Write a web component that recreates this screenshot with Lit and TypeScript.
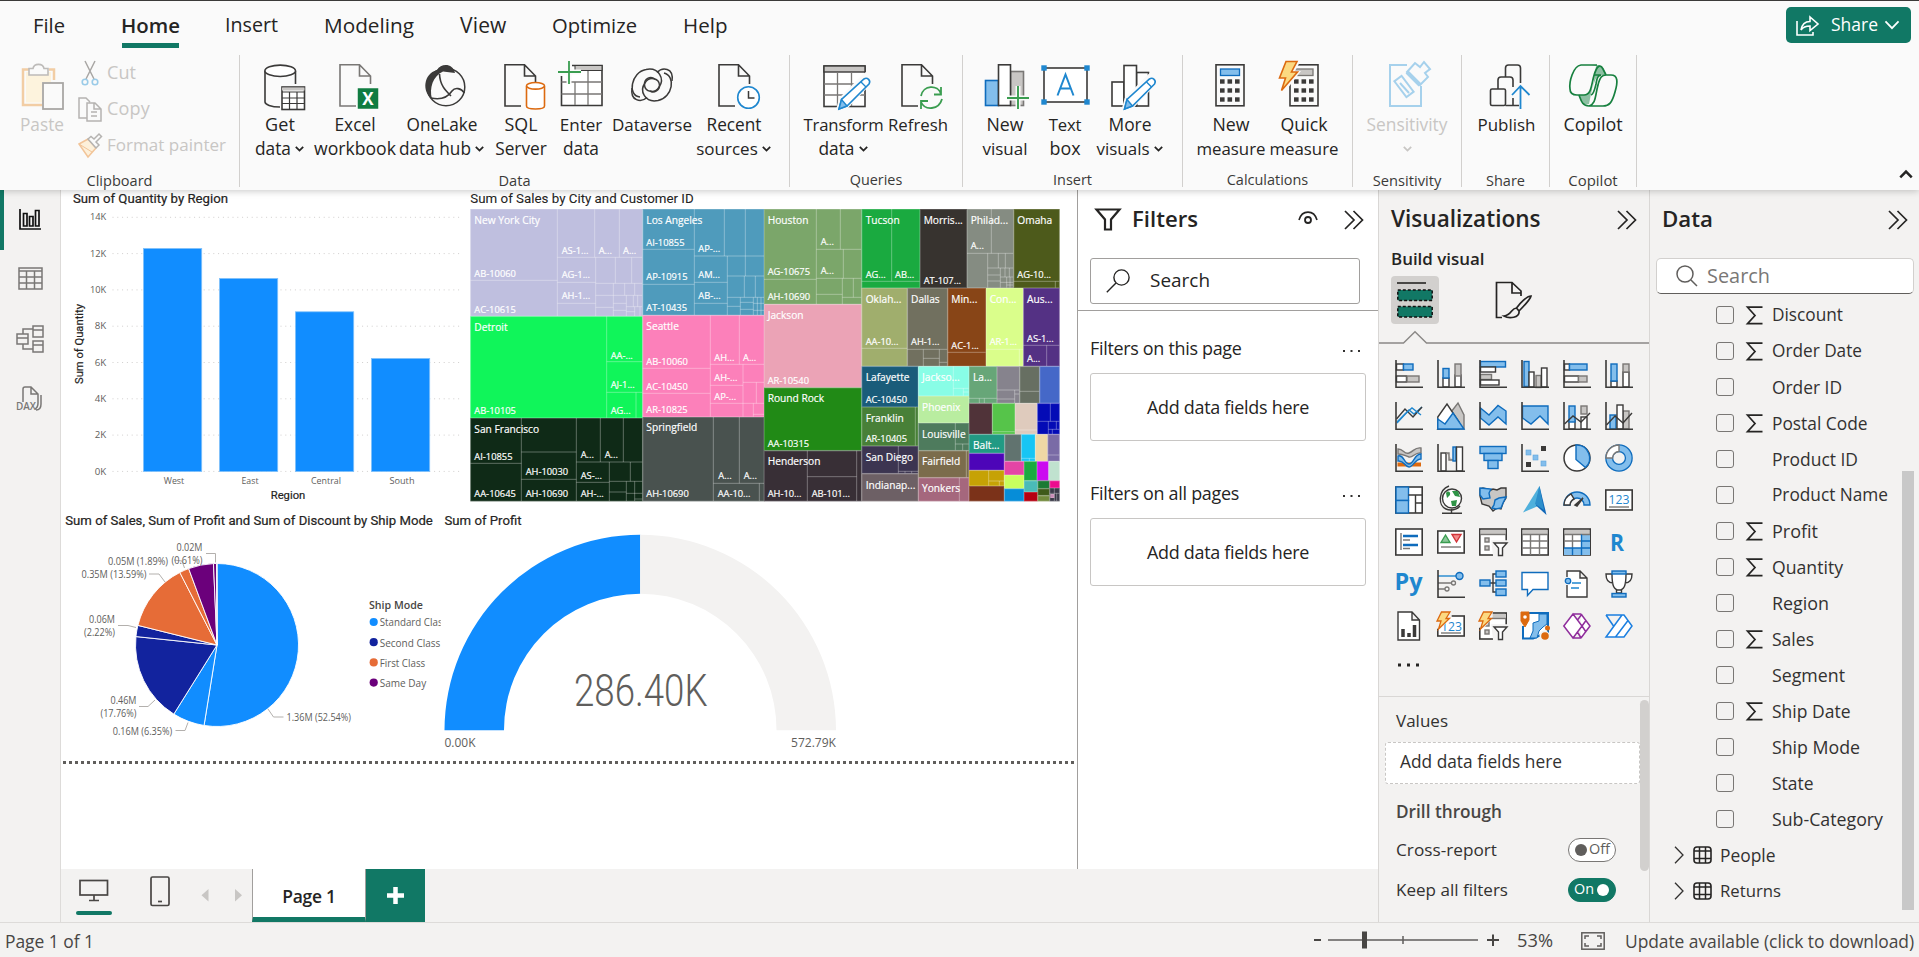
import { LitElement, html, svg, css, nothing } from 'lit';
import { customElement, property } from 'lit/decorators.js';

/* A single line label that sizes and tracks its letters so that it fills a given width. */
@customElement('fit-label')
export class FitLabel extends LitElement {
  @property({ type: Number }) w = 0;
  @property() text = '';
  static styles = css`
    :host { display: inline-block; white-space: pre; flex: none; }
    span { display: inline-block; transform: translate(-1px, -1px); }
  `;
  updated() {
    const s = this.renderRoot.querySelector('span') as HTMLElement;
    if (!this.w || !s) return;
    s.style.letterSpacing = '0px';
    s.style.fontSize = '';
    const target = this.w + 2;
    const k = Math.min(1.05, Math.max(0.97, target / s.getBoundingClientRect().width));
    s.style.fontSize = `${(parseFloat(getComputedStyle(s).fontSize) * k).toFixed(2)}px`;
    const d = (target - s.getBoundingClientRect().width) / this.text.length;
    s.style.letterSpacing = `${d.toFixed(3)}px`;
    this.style.width = `${this.w}px`;
  }
  render() { return html`<span>${this.text}</span>`; }
}
const t = (text: string, w = 0) => html`<fit-label .text=${text} .w=${w}></fit-label>`;

/* ---------- ribbon icons, 48 x 52 ---------- */
const D = '#3b3a39', G = '#797775', B = '#0f6cbd', LB = '#83beec', LG = '#c8c6c4', W = '#fafafa';
const doc = (x: number, c = D) => svg`
  <path d="M${x} 4.7h19l11.5 11.3V46H${x}z" fill=${W} stroke="none"/>
  <path d="M${x + 16} 46H${x}V4.7h19.5l11 11.3V24M${x + 19.5} 4.7V16h11" fill="none" stroke=${c} stroke-width="1.6"/>`;
const pencil = svg`
  <path d="M18 50l3-11 24-24a4 4 0 0 1 6 6L27 46z" fill=${W} stroke=${W} stroke-width="4"/>
  <path d="M19 49l2.5-9.500L44 19a3.600 3.600 0 0 1 5 5L27 46z" fill="#fff" stroke="#1f87cf" stroke-width="1.6"/>
  <path d="M19 49l2.500-9.500 5.500 6.500zM41 22l5 5" fill=${LB} stroke="#1f87cf" stroke-width="1.4"/>`;
const calc = (x: number) => svg`
  <rect x=${x} y="4.800" width="28" height="41" fill=${W} stroke=${D} stroke-width="1.600"/>
  ${[0, 1, 2].map(r => [0, 1, 2].map(c => svg`<rect x=${x + 4 + c * 7.5} y=${19.3 + r * 9} width="4.600" height="4.400" fill=${D}/>`))}`;
const bolt = (s = '') => svg`<path transform=${s} d="M9 1.500H20L14.500 12H20.500L4.500 30.500L8.500 18H2.500z" fill="#fcd981" stroke="#dc6a10" stroke-width="1.600"/>`;
const ic: Record<string, unknown> = {
  get: svg`<path d="M9 11V42c0 2.500 6 5 15 5M39.500 11V24" fill="none" stroke=${D} stroke-width="1.600"/>
    <ellipse cx="24.200" cy="10.800" rx="15.300" ry="5.700" fill="#fff" stroke=${D} stroke-width="1.600"/>
    <rect x="26" y="27" width="22.500" height="22.500" fill="#fff" stroke=${D} stroke-width="1.600"/>
    <path d="M26 29h22.500" stroke=${LG} stroke-width="3"/><path d="M26 32h22.500M26 38h22.500M26 43.500h22.500M33.500 32v17M41 32v17" stroke=${D} stroke-width="1.200"/>`,
  excel: svg`${doc(9, G)}<rect x="26" y="27.500" width="22" height="22" fill="#107c41" stroke=${W} stroke-width="1.500"/>
    <text x="37" y="44.500" font-size="17" font-weight="700" fill="#fff" text-anchor="middle">X</text>`,
  onelake: svg`<circle cx="28" cy="27" r="18.800" fill="none" stroke=${D} stroke-width="1.500"/>
    <path d="M19 10C5 14 4 32 14 39C11 28 15 16 25 11.500L37 13C35 3 23 3 19 10z" fill=${D}/>
    <path d="M21.500 14C22 25 27 30 33 36M13 38C27 41 32 34 34 31C37 27 43 28 46.500 33" fill="none" stroke=${D} stroke-width="1.600"/>`,
  sql: svg`${doc(8)}<path d="M29 28V46c0 5 19 5 19 0V28" fill="#fff" stroke=${W} stroke-width="4"/>
    <path d="M29.500 26V46c0 4 18 4 18 0V26" fill="#fff" stroke="#dc6a10" stroke-width="1.600"/><ellipse cx="38.500" cy="25.800" rx="9" ry="3.300" fill="#fff" stroke="#dc6a10" stroke-width="1.600"/>`,
  enter: svg`<path d="M15 5.500H45V45.500H4.500V16" fill="#fff" stroke=${D} stroke-width="1.600"/><rect x="18" y="5.500" width="27" height="5" fill=${LG} stroke=${D} stroke-width="1"/>
    <path d="M31 11v34M18 22v23M4.500 22H45M4.500 34H45" stroke=${G} stroke-width="1.300"/><path d="M12 1V24M1 12H24" stroke=${W} stroke-width="5"/><path d="M12 1V24M1 12H24" stroke="#3a9d50" stroke-width="1.800"/>`,
  dataverse: svg`<g fill="none" stroke=${D} stroke-width="1.500"><path d="M12 37C-1 36 3 12 18 9.500C31 7 37 19 31 27C27 34 17 32 16.500 25C16 19 22 15.500 27 19"/><path d="M36 13C48 16 45 37 30 40.500C17 43 11 31 17 23C21 16 31 18 31.500 25C32 30 26 33.500 22 31"/><path d="M29 12.500C34 7 46 7 44 21M4 28C2 41 13 43 19 37.500"/></g>`,
  recent: svg`${doc(9)}<circle cx="38.500" cy="37.500" r="12.500" fill=${W}/><circle cx="38.500" cy="37.500" r="10.800" fill="#fff" stroke="#1f87cf" stroke-width="1.600"/><path d="M38.500 31V38h6" fill="none" stroke=${D} stroke-width="1.500"/>`,
  transform: svg`<rect x="4" y="6" width="41" height="40.500" fill="#fff" stroke=${D} stroke-width="1.600"/><rect x="4" y="6" width="41" height="6" fill=${LG} stroke=${D} stroke-width="1.400"/>
    <path d="M17.500 12v34M31.500 12v34M4 24H45M4 35H45" stroke=${G} stroke-width="1.300"/>${pencil}`,
  refresh: svg`${doc(8)}<circle cx="37" cy="38" r="13" fill=${W}/><path d="M27 36C29 25 44 24 47 34M47 27V34.500H40M48 39C45 50 31 51 27 42M27 49V41H34" fill="none" stroke="#3a9d50" stroke-width="1.800"/>`,
  newvisual: svg`<rect x="4.500" y="20.500" width="13" height="25" fill=${LB} stroke=${B} stroke-width="1.600"/><rect x="29.500" y="11.500" width="13" height="34" fill=${LG} stroke=${G} stroke-width="1.600"/><rect x="17.500" y="4.800" width="12" height="40.700" fill="#fff" stroke=${D} stroke-width="1.600"/>
    <path d="M37 26V49M26 38H48" stroke=${W} stroke-width="5"/><path d="M37 26V49M26 38H48" stroke="#3a9d50" stroke-width="1.900"/>`,
  textbox: svg`<rect x="3" y="8" width="43" height="34" fill="#fff" stroke=${D} stroke-width="1.600"/>${[[3, 8], [46, 8], [3, 42], [46, 42]].map(([a, b]) => svg`<rect x=${a - 2.7} y=${b - 2.7} width="5.400" height="5.400" fill="#1f87cf"/>`)}
    <path d="M16.500 35.500L24.500 14.500L32.500 35.500M19.500 28.500H29.500" fill="none" stroke="#1f87cf" stroke-width="2"/>`,
  morevisuals: svg`<rect x="6" y="22" width="12" height="24" fill="#fff" stroke=${D} stroke-width="1.600"/><rect x="30.500" y="12.500" width="12" height="33.500" fill="#fff" stroke=${D} stroke-width="1.600"/><rect x="18" y="5.500" width="12.500" height="40.500" fill="#fff" stroke=${D} stroke-width="1.600"/><g transform="translate(-.5 0)">${pencil}</g>`,
  newmeasure: svg`${calc(9)}<rect x="13.500" y="9" width="19" height="6.500" fill=${LB} stroke=${B} stroke-width="1.300"/>`,
  quick: svg`${calc(10)}<rect x="14" y="9" width="19" height="6.500" fill=${LG} stroke=${G} stroke-width="1.300"/><path d="M8 0H21L15 11H21L4 33L0 17z" fill=${W}/>${bolt('translate(-3 0)')}`,
  sensitivity: svg`<path d="M24 5H7V46H38V26" fill="none" stroke="#a6d1ec" stroke-width="2"/><g fill=${W} stroke="#a6d1ec" stroke-width="2"><rect x="11" y="22" width="20" height="9" transform="rotate(53 21 26.500)"/><path d="M17 23L26 33"/><path d="M24 12L32 3L37 7L41 2L47 9L42 13L45 17L37 25z"/><path d="M24 12L37 25" stroke-width="4"/></g>`,
  publish: svg`<g fill="none" stroke=${D} stroke-width="1.600"><rect x="7.500" y="29" width="15" height="16.500" rx="1.500"/><path d="M15 29V20a3 3 0 0 1 3-3h9a3 3 0 0 1 3 3V27M22.500 17V8a3 3 0 0 1 3-3h9a3 3 0 0 1 3 3V23M22.500 45.500H36M30 38v7"/></g><path d="M37.500 49V26M29 35L37.500 26L46.500 35" fill="none" stroke="#1f87cf" stroke-width="1.800"/>`,
  copilot: svg`<path d="M22 5H29C34 5 35 9 37 15H33C27 15 26 20 24 27L27 6z" fill="#8cc0a2"/><path d="M10 35H15C21 35 22 30 24 24L20 44C13 46 12 41 10 35z" fill="#8cc0a2"/>
    <g fill="none" stroke="#17803f" stroke-width="1.700"><path d="M28 5H12C4 6 0 22 1 29C1 34 5 35 8 35H15C24 35 22 20 27 10C29 5 32 5 34 9L37 15"/><path d="M37 15H42C49 15 49 22 46 32C43 43 40 46 34 46H20C13 46 12 40 10 35M20 46C27 44 26 36 29 25C31 17 33 15 37 15M22 35C25 34 26 28 27 24C28 19 28 16 32 15H25"/></g>`,
};
const ico = (name: string) => html`<svg class="ri" width="48" height="52" viewBox="0 0 48 52">${ic[name]}</svg>`;
const chev = (w = 9, sw = 1.8) => html`<svg class="chev" width=${w} height=${w * 0.62} viewBox="0 0 9 5.600"><path d="M.8 .8L4.500 4.600L8.200 .8" fill="none" stroke="currentColor" stroke-width=${sw}/></svg>`;
const dbl = html`<svg width="20" height="20" viewBox="0 0 20 20"><path d="M1 1l9 9-9 9M9.500 1l9 9-9 9" fill="none" stroke="#252423" stroke-width="1.700"/></svg>`;

type Line = [string, number, boolean?];
interface Btn { x: number; w: number; icon: string; lines: Line[]; off?: boolean }
const groups: { x: number; end: number; label: string; lw: number; btns: Btn[] }[] = [
  { x: 240, end: 790, label: 'Data', lw: 30, btns: [
    { x: 252, w: 56, icon: 'get', lines: [['Get', 28], ['data', 34, true]] },
    { x: 315, w: 80, icon: 'excel', lines: [['Excel', 39], ['workbook', 80]] },
    { x: 399, w: 86, icon: 'onelake', lines: [['OneLake', 69], ['data hub', 70, true]] },
    { x: 495, w: 52, icon: 'sql', lines: [['SQL', 31], ['Server', 49.5]] },
    { x: 559, w: 44, icon: 'enter', lines: [['Enter', 40.5], ['data', 34]] },
    { x: 613, w: 78, icon: 'dataverse', lines: [['Dataverse', 78]] },
    { x: 696, w: 76, icon: 'recent', lines: [['Recent', 53], ['sources', 59.5, true]] } ] },
  { x: 790, end: 963, label: 'Queries', lw: 50.5, btns: [
    { x: 804, w: 79, icon: 'transform', lines: [['Transform', 78], ['data', 34, true]] },
    { x: 889, w: 58, icon: 'refresh', lines: [['Refresh', 58]] } ] },
  { x: 963, end: 1183, label: 'Insert', lw: 37, btns: [
    { x: 981, w: 48, icon: 'newvisual', lines: [['New', 35], ['visual', 43]] },
    { x: 1041, w: 48, icon: 'textbox', lines: [['Text', 30.5], ['box', 29]] },
    { x: 1097, w: 66, icon: 'morevisuals', lines: [['More', 41], ['visuals', 51, true]] } ] },
  { x: 1183, end: 1353, label: 'Calculations', lw: 79.5, btns: [
    { x: 1197, w: 68, icon: 'newmeasure', lines: [['New', 35], ['measure', 67]] },
    { x: 1270, w: 68, icon: 'quick', lines: [['Quick', 45], ['measure', 67]] } ] },
  { x: 1353, end: 1462, label: 'Sensitivity', lw: 66.5, btns: [
    { x: 1367, w: 80, icon: 'sensitivity', lines: [['Sensitivity', 79], ['', 0, true]], off: true } ] },
  { x: 1462, end: 1550, label: 'Share', lw: 37, btns: [{ x: 1478, w: 57, icon: 'publish', lines: [['Publish', 56]] }] },
  { x: 1550, end: 1637, label: 'Copilot', lw: 47.4, btns: [{ x: 1564, w: 58, icon: 'copilot', lines: [['Copilot', 57]] }] },
];
const tabs: [string, number, number][] = [['File', 34, 30], ['Home', 122, 57], ['Insert', 226, 51], ['Modeling', 325, 88], ['View', 461, 44.5], ['Optimize', 553, 83], ['Help', 684, 42.5]];

/* ---------- chart text: y is the optical centre ---------- */
const st = (x: number, y: number, s: string, w: number, size: number, cls = 'cx', anchor = 'start') =>
  svg`<text class=${cls} x=${x} y=${y + size * 0.36} font-size=${size} text-anchor=${anchor} textLength=${w || nothing} lengthAdjust="spacingAndGlyphs">${s}</text>`;

const barChart = () => svg`
  ${st(73, 198.5, 'Sum of Quantity by Region', 155, 13, 'ti')}
  ${[14, 12, 10, 8, 6, 4, 2, 0].map((v, i) => { const y = 217.3 + i * 36.3; return svg`
    <line x1="112.500" x2="460" y1=${y} y2=${y} stroke="#d0cecd" stroke-width="1" stroke-dasharray="1 3.800"/>
    ${st(106.3, y - 0.3, v + 'K', v > 9 ? 16.3 : 11.5, 9.6, 'cx', 'end')}`; })}
  ${([['West', 143, 248, 20.5], ['East', 219, 278, 17], ['Central', 295, 311.3, 30], ['South', 371, 358, 25]] as [string, number, number, number][]).map(([n, x, y, w]) => svg`
    <rect x=${x + 0.5} y=${y + 0.5} width="58.200" height=${471 - y} fill="#118dff" stroke="#7fc0fb" stroke-width=".8"/>
    ${st(x + 31, 481, n, w, 9.6, 'cx', 'middle')}`)}
  ${st(288, 495, 'Region', 34.5, 11.5, 'ti', 'middle')}
  <g transform="translate(79.300 344) rotate(-90)">${st(0, 0, 'Sum of Quantity', 80, 11.5, 'ti', 'middle')}</g>`;

/* ---------- treemap, laid out on a canvas three units to the pixel ---------- */
type City = [string, number, number, number, number, string, [string, number, number][]];
const cities: City[] = [
  ['#bfbfdf', 31, 72, 547, 393, 'M292 72V393M31 286H292M404 72V217M478 72V217M292 217H547M407 217V393M292 292H407M292 355H407M466 217V295M515 217V295M407 295H547M460 295V393M407 331H460M407 367H460M494 295V331M524 295V331M460 331H547M460 355H499M460 376H499M499 331V393M520 331V365M533 331V365M499 365H547M540 365V393M524 365V393M499 380H524',
    [['New York City', 44, 105], ['AB-10060', 44, 265], ['AC-10615', 44, 373], ['AS-1...', 306, 196], ['A...', 417, 196], ['A...', 490, 196], ['AG-1...', 306, 268], ['AH-1...', 306, 331]]],
  ['#10f55a', 31, 394, 547, 698, 'M440 394V698M440 530H547M440 622H547M528 622V698', [['Detroit', 44, 426], ['AB-10105', 44, 676], ['AA-...', 453, 510], ['AJ-1...', 453, 599], ['AG...', 453, 676]]],
  ['#0f2a17', 31, 699, 547, 948, 'M184 699V948M349 699V948M31 835H184M184 801H349M184 883H349M421 699V831M490 699V831M349 831H547M448 831V948M349 892H448M511 831V889M448 889H547M499 889V948M524 889V948M448 921H499M499 925H547M524 942H547',
    [['San Francisco', 44, 732], ['AI-10855', 44, 814], ['AA-10645', 44, 925], ['AH-10030', 198, 859], ['AH-10690', 198, 925], ['A...', 363, 809], ['A...', 435, 809], ['AS-...', 363, 871], ['AH-...', 363, 925]]],
  ['#4f9bbc', 548, 72, 912, 390, 'M703 72V390M548 193H703M548 298H703M793 72V213M856 72V273M703 213H912M802 213V390M703 292H802M703 355H802M802 273H912M853 273V337M886 273V337M802 337H912M841 337V390M841 352H880M802 364H841M841 373H880M880 337V390M892 337V390M903 337V390M880 355H912M880 376H912',
    [['Los Angeles', 560, 105], ['AI-10855', 560, 172], ['AP-10915', 560, 274], ['AT-10435', 560, 367], ['AP-...', 716, 191], ['AM...', 716, 268], ['AB-...', 716, 331]]],
  ['#fc80ba', 548, 391, 912, 695, 'M751 391V695M548 550H751M548 625H751M838 391V538M751 538H912M849 538V695M751 601H849M751 655H912M849 592H912M889 592V655M880 655V695M880 688H912',
    [['Seattle', 560, 423], ['AB-10060', 560, 529], ['AC-10450', 560, 604], ['AR-10825', 560, 673], ['AH...', 764, 518], ['A...', 850, 518], ['AH-...', 764, 578], ['AP-...', 764, 635]]],
  ['#49524f', 548, 696, 912, 948, 'M760 696V948M838 696V895M760 895H912M898 895V948', [['Springfield', 560, 726], ['AH-10690', 560, 925], ['A...', 776, 872], ['A...', 852, 872], ['AA-10...', 774, 925]]],
  ['#7ba66a', 912, 72, 1204, 357, 'M1069 72V357M912 283H1069M1141 72V193M1069 193H1204M1150 193V280M1069 280H1204M1147 280V357M1069 328H1147M1180 280V337M1147 337H1204', [['Houston', 924, 105], ['AG-10675', 924, 260], ['AH-10690', 924, 334], ['A...', 1083, 170], ['A...', 1083, 257]]],
  ['#eba3b6', 912, 358, 1204, 607, '', [['Jackson', 924, 390], ['AR-10540', 924, 586]]],
  ['#218a16', 912, 608, 1204, 796, '', [['Round Rock', 924, 639], ['AA-10315', 924, 775]]],
  ['#382f36', 912, 797, 1204, 948, 'M1042 797V948M1042 875H1190M1190 797V948', [['Henderson', 924, 828], ['AH-10...', 924, 925], ['AB-101...', 1056, 925]]],
  ['#1aaa40', 1205, 72, 1379, 308, 'M1295 72V289M1205 289H1379', [['Tucson', 1218, 105], ['AG...', 1218, 269], ['AB...', 1306, 269]]],
  ['#37332f', 1380, 72, 1520, 308, '', [['Morris...', 1392, 105], ['AT-107...', 1392, 287]]],
  ['#858c82', 1521, 72, 1660, 308, 'M1594 72V205M1521 205H1660M1583 205V308M1615 205V249M1636 205V249M1583 249H1660M1621 249V308M1583 270H1621M1583 288H1621M1635 249V276M1648 249V276M1621 276H1660M1640 276V308M1650 276V308M1621 292H1660M1640 300H1660', [['Philad...', 1533, 105], ['A...', 1533, 182]]],
  ['#4d5a1b', 1661, 72, 1798, 308, 'M1661 289H1798M1786 289V308', [['Omaha', 1673, 105], ['AG-10...', 1673, 269]]],
  ['#a0ae6d', 1205, 309, 1341, 543, 'M1205 490H1341', [['Oklah...', 1218, 342], ['AA-10...', 1218, 470]]],
  ['#71705f', 1342, 309, 1462, 543, 'M1342 493H1462M1390 493V543M1438 493V543M1390 520H1438M1438 532H1462', [['Dallas', 1354, 342], ['AH-1...', 1354, 470]]],
  ['#884517', 1463, 309, 1577, 543, 'M1463 502H1577', [['Min...', 1475, 342], ['AC-1...', 1475, 482]]],
  ['#dafe8b', 1578, 309, 1689, 543, 'M1578 493H1689M1678 493V543', [['Con...', 1590, 342], ['AR-1...', 1590, 470]]],
  ['#543184', 1690, 309, 1798, 543, 'M1690 481H1798M1760 481V543', [['Aus...', 1702, 342], ['AS-1...', 1702, 461], ['A...', 1702, 521]]],
  ['#1a5c7a', 1205, 544, 1374, 665, '', [['Lafayette', 1218, 577], ['AC-10450', 1218, 643]]],
  ['#488038', 1205, 666, 1374, 782, 'M1366 666V782', [['Franklin', 1218, 699], ['AR-10405', 1218, 761]]],
  ['#3c3551', 1205, 783, 1374, 865, 'M1315 783V865M1315 859H1374M1335 859V865M1355 859V865', [['San Diego', 1218, 817]]],
  ['#6d6065', 1205, 866, 1374, 948, '', [['Indianap...', 1218, 900]]],
  ['#88fde6', 1375, 544, 1526, 632, 'M1480 544V632M1480 610H1526M1510 610V632M1510 621H1526', [['Jackso...', 1387, 577]]],
  ['#b9eda0', 1375, 633, 1526, 713, '', [['Phoenix', 1387, 667]]],
  ['#4e7b5d', 1375, 714, 1526, 796, 'M1486 714V796M1486 777H1526M1508 777V796', [['Louisville', 1387, 748]]],
  ['#7b6c4c', 1375, 797, 1526, 877, 'M1519 797V877', [['Fairfield', 1387, 828]]],
  ['#a5677d', 1375, 878, 1526, 948, 'M1498 878V948', [['Yonkers', 1387, 909]]],
  ['#67a678', 1527, 544, 1610, 654, 'M1527 640H1610M1558 640V654M1573 640V654', [['La...', 1540, 577]]],
  ['#86838d', 1611, 544, 1678, 654, 'M1611 615H1678M1664 615V654M1664 627H1678M1611 642H1664', []],
  ['#676f62', 1679, 544, 1738, 654, 'M1679 619H1738', []], ['#4568c8', 1739, 544, 1798, 654, '', []],
  ['#503339', 1527, 655, 1596, 747, '', []], ['#56c44a', 1597, 655, 1664, 747, 'M1597 740H1664', []], ['#dfcbbd', 1665, 655, 1731, 747, 'M1665 735H1731', []],
  ['#040bb6', 1732, 655, 1798, 747, 'M1771 655V709M1732 709H1798M1765 709V747M1765 733H1798M1777 733V747M1789 709V733', []],
  ['#219a84', 1527, 748, 1633, 804, '', [['Balt...', 1540, 780]]],
  ['#61736f', 1634, 748, 1683, 828, '', []], ['#17c5f4', 1684, 748, 1725, 828, 'M1684 820H1725M1708 820V828', []], ['#efd8a5', 1726, 748, 1762, 828, '', []], ['#7a6ba6', 1763, 748, 1798, 828, 'M1763 810H1798', []],
  ['#4d05b8', 1527, 805, 1632, 855, '', []], ['#c6a205', 1527, 856, 1632, 902, 'M1586 856V902M1586 888H1632M1618 888V902', []], ['#7b3219', 1527, 903, 1632, 948, '', []],
  ['#e445a5', 1633, 829, 1691, 869, '', []], ['#c9ff5e', 1633, 870, 1691, 910, '', []], ['#068dd8', 1633, 911, 1691, 948, '', []],
  ['#1aaa40', 1692, 829, 1730, 886, '', []], ['#cb0cf0', 1731, 829, 1765, 886, '', []], ['#c0e2cf', 1766, 829, 1798, 886, '', []],
  ['#4abbb8', 1692, 887, 1732, 920, '', []], ['#1b7a34', 1733, 887, 1768, 910, '', []], ['#ec0b8e', 1769, 887, 1798, 908, '', []],
  ['#b50011', 1692, 921, 1732, 948, '', []], ['#3f5a1a', 1733, 911, 1768, 931, '', []], ['#728a3c', 1733, 932, 1768, 948, '', []],
  ['#3a3a48', 1769, 909, 1798, 948, 'M1783 909V948M1769 925H1798M1790 925V948', []], ['#c78bb5', 1771, 927, 1782, 938, '', []],
];
const isId = (s: string) => /^A[A-Z]?[-.]|^A[A-Z]\.\.\./.test(s);
const treemap = () => svg`
  <text class="ti" x="31" y="53.500" font-size="39" textLength="670" lengthAdjust="spacingAndGlyphs">Sum of Sales by City and Customer ID</text>
  ${cities.map(([c, x0, y0, x1, y1, p]) => svg`<rect x=${x0} y=${y0} width=${x1 - x0 + 1} height=${y1 - y0 + 1} fill=${c}/><rect x=${x0 + 1} y=${y0 + 1} width=${x1 - x0 - 1} height=${y1 - y0 - 1} fill="none" stroke="#fff" stroke-opacity=".22" stroke-width="2.500"/>
    ${p ? svg`<path d=${p} fill="none" stroke="#fff" stroke-opacity=".32" stroke-width="3"/>` : ''}`)}
  ${cities.map(c => c[6].map(([s, x, y]) => svg`<text class="tm" x=${x - 1} y=${y + 10.5} font-size=${isId(s) ? 28 : 30.6}>${s}</text>`))}`;

/* ---------- pie ---------- */
const slices: [number, string][] = [[52.54, '#118dff'], [6.35, '#118dff'], [17.76, '#12239e'], [2.22, '#12239e'], [13.59, '#e66c37'], [1.89, '#e66c37'], [4.96, '#6b007b'], [0.61, '#6b007b'], [0.08, '#6b007b']];
const pie = () => {
  let a = 0; const cx = 217, cy = 645, r = 81.5;
  const pt = (p: number) => { const q = (p / 100) * Math.PI * 2; return `${(cx + r * Math.sin(q)).toFixed(2)} ${(cy - r * Math.cos(q)).toFixed(2)}`; };
  return svg`${slices.map(([v, c]) => { const s = pt(a); a += v; return svg`<path d="M${cx} ${cy}L${s}A${r} ${r} 0 ${v > 50 ? 1 : 0} 1 ${pt(a)}z" fill=${c} stroke="#fff" stroke-width=".9"/>`; })}
  <path d="M206 553.500h9.500v9M174 560l8 1 2.500 7M149 574h10l6 8M118 625.500h10l8 2M139 706.500h9l7-6.500M175.500 730.500h9.500l3-8M268 709l5.500 8h10" fill="none" stroke="#b3b0ad" stroke-width="1"/>
  ${st(202.5, 547.7, '0.02M', 26, 10.2, 'cx', 'end')}${st(202.5, 560.5, '(0.61%)', 31, 10.2, 'cx', 'end')}
  ${st(108, 561.5, '0.05M (1.89%)', 60, 10.2)}${st(81.5, 574.7, '0.35M (13.59%)', 65, 10.2)}
  ${st(115, 619.5, '0.06M', 26, 10.2, 'cx', 'end')}${st(115, 632.5, '(2.22%)', 31, 10.2, 'cx', 'end')}
  ${st(136.5, 700.5, '0.46M', 26, 10.2, 'cx', 'end')}${st(136.5, 713, '(17.76%)', 36, 10.2, 'cx', 'end')}
  ${st(112.7, 731.5, '0.16M (6.35%)', 59.5, 10.2)}${st(286.5, 717.5, '1.36M (52.54%)', 64.5, 10.2)}
  ${st(65.3, 520.3, 'Sum of Sales, Sum of Profit and Sum of Discount by Ship Mode', 367.5, 13, 'ti')}
  ${st(369, 605.3, 'Ship Mode', 54, 11, 'cb')}
  <clipPath id="lc"><rect x="360" y="600" width="80.700" height="100"/></clipPath><g clip-path="url(#lc)">
  ${([['Standard Class', '#118dff', 67.5], ['Second Class', '#12239e', 60.7], ['First Class', '#e66c37', 45.5], ['Same Day', '#6b007b', 46.5]] as [string, string, number][]).map(([s, c, w], i) => svg`
    <circle cx="373.700" cy=${622 + i * 20.2} r="4.100" fill=${c}/>${st(379.7, 622.3 + i * 20.2, s, w, 11.2)}`)}</g>`;
};
const gauge = () => svg`
  ${st(444.5, 520.3, 'Sum of Profit', 77, 13, 'ti')}
  <path d="M444.500 730.300A195.700 195.700 0 0 1 640.200 534.800V593.800A136 136 0 0 0 504 730.300z" fill="#118dff"/>
  <path d="M640.200 534.800A195.700 195.700 0 0 1 836 730.300H776.500A136 136 0 0 0 640.200 593.800z" fill="#f3f2f1"/>
  ${st(640.8, 690.6, '286.40K', 133.5, 44, 'big', 'middle')}
  ${st(444.500, 742.5, '0.00K', 31, 12)}${st(836, 742.5, '572.79K', 45, 12, 'cx', 'end')}`;

/* ---------- visualization gallery, 28 x 28 ---------- */
const ax = svg`<path d="M1 0V27.200H28" fill="none" stroke=${D} stroke-width="1.600"/>`;
const R = (x: number, y: number, w: number, h: number, k: string) => {
  const [f, s] = ({ b: [LB, B], w: ['#fff', D], g: [LG, G] } as Record<string, string[]>)[k];
  return svg`<rect x=${x} y=${y} width=${w} height=${h} fill=${f} stroke=${s} stroke-width="1.400"/>`;
};
const P = (d: string, s = D, f = 'none', w = 1.4) => svg`<path d=${d} stroke=${s} fill=${f} stroke-width=${w}/>`;
const frame = (y = 1, h = 26) => svg`<rect x=".8" y=${y} width="26.400" height=${h} fill="#fff" stroke=${D} stroke-width="1.600"/>`;
const funnel = P('M15 15H28L23.500 20V27.500H19.500V20z', D, '#fff');
const smallBolt = P('M4.500 0H13L9 6.500H12.500L1.500 17L4 9H0z', '#dc6a10', '#fcd981', 1.3);
const viz: unknown[] = [
  [R(1.5, 4, 7, 6, 'w'), R(8.5, 4, 9.5, 6, 'b'), R(1.5, 16, 10, 6, 'w'), R(12, 16, 12, 6, 'g'), ax],
  [R(6, 18, 6, 9, 'w'), R(6, 8.500, 6, 9.500, 'b'), R(18, 15, 6, 12, 'w'), R(18, 4, 6, 12, 'g'), ax],
  [R(1.5, 1.5, 25, 5.500, 'b'), R(1.5, 7, 15, 5, 'w'), R(1.5, 14.500, 11, 5, 'g'), R(1.5, 20, 18.500, 5, 'w'), ax],
  [R(3, 1.5, 5, 25, 'b'), R(8, 12, 5, 15, 'w'), R(15, 15.500, 5, 12, 'g'), R(20.500, 8, 5.500, 19, 'w'), ax],
  [R(1.500, 4, 5, 6, 'w'), R(6.500, 4, 17.500, 6, 'b'), R(1.500, 16, 14, 6, 'w'), R(15.500, 16, 8.500, 6, 'g'), ax],
  [R(6, 21, 6, 6, 'w'), R(6, 4, 6, 17, 'b'), R(18, 12, 6, 15, 'w'), R(18, 4, 6, 8, 'g'), ax],
  [P('M2 21L14 8L19 12L27 5', '#1f87cf'), P('M1.500 17L10 7L18 15L27 5M1.500 13'), P('M2 20L10 12L17 6L26 13', '#1f87cf'), ax],
  [P('M.8 27L21 1L27 13V27z', G, LG), P('M.8 15L10 2L22 20V27H.8z', D, '#fff'), P('M.8 17L8 22L16 11L27 27H.8z', B, LB)],
  [P('M1.500 6L10 13L19 3.500L27 9V22L19 15L10 23L1.500 16z', B, LB), ax],
  [P('M1.500 4H27V22L19 14L10 22L1.500 16z', B, LB), ax],
  [R(6, 18, 6, 9, 'w'), R(6, 4, 6, 16, 'b'), R(18, 15, 6, 12, 'w'), R(18, 4, 6, 8, 'g'), P('M1.500 22L10 14L18 20L27 11'), ax],
  [R(5, 13, 6, 14, 'b'), R(18, 9, 6, 18, 'g'), R(12, 3, 6, 24, 'w'), P('M1.500 23L10 14L18 21L27 11'), ax],
  [P('M2.500 20.500H26', '#dc6a10', 'none', 4), P('M3 5C9 5 9 11 14 9S20 3 26 4V9C20 8 18 14 14 13S9 10 3 10z', G, LG), P('M3 12C9 10 9 20 14 20S19 10 26 10V15C20 15 18 23 14 23S9 16 3 17z', B, LB), ax],
  [R(4, 9, 5, 18, 'w'), P('M9 9h3v7h4', G, LG), R(16, 3, 3, 14, 'b'), R(19.500, 3, 6, 24, 'w'), ax],
  [R(1, 2.500, 26, 7, 'b'), R(5, 9.500, 18, 7, 'b'), R(9, 16.500, 10, 8, 'b')],
  [svg`<g fill=${D}><rect x="20" y="2" width="5" height="5"/><rect x="5" y="18" width="5" height="5"/></g><g fill=${LB} stroke="#5ea5dc" stroke-width=".6"><rect x="5" y="6" width="5" height="5"/><rect x="12" y="11" width="5" height="5"/><rect x="20" y="17" width="5" height="5"/></g>`, ax],
  [svg`<circle cx="14" cy="14" r="13" fill="#fff" stroke=${D} stroke-width="1.500"/>`, P('M14 1A13 13 0 0 1 22.500 23.500L13 15.500V1z', B, LB)],
  [svg`<circle cx="14" cy="14" r="9.800" fill="none" stroke=${B} stroke-width="8"/><circle cx="14" cy="14" r="9.800" fill="none" stroke=${LB} stroke-width="5.400"/>`, P('M1 14A13 13 0 0 1 14 1V7.500A6.500 6.500 0 0 0 7.500 14z', G, '#fff')],
  [frame(), R(1, 1, 12.500, 13.500, 'b'), R(1, 14.500, 12.500, 12.500, 'b'), P('M13.500 9H27M20.500 9V27M20.500 17H27')],
  [svg`<circle cx="15" cy="12.500" r="9.500" fill="#fff" stroke=${D} stroke-width="1.400"/>`, P('M9 7C11 4 14 6 13 9L10 12zM15 5L21 5L23 11L18 10zM14 15L20 14L19 20L15 20z', 'none', '#2f9447'), P('M12 0C1 4 1 20 9 23C13 25 20 24 23 20M14.500 23V27M5 27.200H25')],
  [P('M1 3L4 2L12 4L14 3L18 4L22 2H27V12L24 17L22 23L18 22L14 25L10 20L3 18L1 10z', D, LG), P('M1 2L12 3L10 7L11 12L4 13L1 9z', B, LB), P('M16 14L20 12L27 11L24 17L22 22L17 23L13 22L15 19z', B, LB)],
  [P('M18.500 0L2 26.500L16 20.500z', 'none', '#4fb0dc'), P('M18.500 0L25.500 29L15 19.500z', 'none', '#1168b8'), P('M18.500 0L14 18L23 24z', 'none', '#2d8fcb')],
  [P('M1 19A13 13 0 0 1 27 19H21A7 7 0 0 0 7 19z', B, LB), P('M1 19A13 13 0 0 1 8 8L11 13A7 7 0 0 0 7 19z', D, '#fff'), P('M20 12L12 19L14 20z', D, D, 1.500)],
  [frame(4, 20), svg`<text x="14" y="18" font-size="13" fill="#1f87cf" text-anchor="middle" textLength="21" lengthAdjust="spacingAndGlyphs">123</text>`, P('M4 21H24', G)],
  [frame(), P('M6 5V22', G), P('M8 8H23M8 17H23', B, 'none', 2.500), P('M8 12H15M8 20.500H15', G)],
  [frame(3, 22), P('M4 14.500L8.500 7L13 14.500z', '#3a9d50', '#8cc79a'), P('M15 6.500H24L19.500 14z', '#d13438', '#f28b8b'), P('M4 19H24', G)],
  [frame(), svg`<rect x="1.500" y="2" width="25" height="4" fill=${LG}/>`, P('M1 6.500H27', G), R(6, 10, 4, 4, 'g'), R(6, 18, 4, 4, 'g'), P('M13 13H30V30H15z', '#f3f2f1', '#f3f2f1'), funnel],
  [frame(), svg`<rect x="1.500" y="2" width="25" height="4" fill=${LG}/>`, P('M1 6.500H27M1 13H27M1 20H27M9.500 6.500V27M18.500 6.500V27', G)],
  [frame(), svg`<rect x="1.500" y="2" width="25" height="4" fill=${LG}/><path d="M18.500 6.500H27V27H1V20H18.500z" fill=${LB}/>`, P('M1 6.500H27M1 13H18M9.500 6.500V20', G), P('M18.500 6.500V27M18.500 13H27M1 20H27M9.500 20V27', B)],
  [svg`<text x="5" y="22.500" font-size="23" font-weight="700" fill="#1f87cf" textLength="14" lengthAdjust="spacingAndGlyphs">R</text>`],
  [svg`<text x="-.5" y="20" font-size="24" font-weight="700" fill="#1f87cf" textLength="28" lengthAdjust="spacingAndGlyphs">Py</text>`],
  [P('M1 6H20', '#1f87cf'), svg`<circle cx="22.500" cy="6" r="3.500" fill=${LB} stroke=${B} stroke-width="1.400"/><circle cx="16.500" cy="13" r="2" fill="none" stroke=${G} stroke-width="1.300"/><circle cx="10" cy="19" r="2" fill="none" stroke=${G} stroke-width="1.300"/>`, P('M1 13H14.500M1 19H8', G), ax],
  [P('M10 13H17M14 13V4H17M14 13V22H17'), R(1, 10, 10, 6, 'b'), R(17, 1, 10, 6, 'b'), R(17, 10, 10, 6, 'b'), R(17, 19, 10, 6.500, 'b')],
  [P('M1 2.500H27V19.500H12L6.500 25.500V19.500H1z', B, '#fff')],
  [P('M4 7V1H17L24 8V27H4V15M17 1V8H24', D, '#fff'), svg`<circle cx="5" cy="11" r="2.700" fill=${LB} stroke=${B} stroke-width="1.300"/>`, P('M9 13H18M8 18H16', '#1f87cf')],
  [P('M7 4C7 16 9 20 14 20S21 16 21 4M7 4H1C1 10 3 13 8 13M21 4H27C27 10 25 13 20 13M11.500 20V23H16.500V20', D, '#fff'), R(7, 1, 14, 3, 'b'), R(7, 23.500, 14, 3.500, 'b')],
  [P('M3 0H17L24.500 8V28H3zM17 0V8H24.500', D, '#fff'), P('M8 25V17M14 25V21M19.500 25V13', D, 'none', 3.500)],
  [frame(4, 20), svg`<text x="14.500" y="19" font-size="13" fill="#1f87cf" text-anchor="middle" textLength="21" lengthAdjust="spacingAndGlyphs">123</text>`, P('M4 21H24', G), P('M-1 0H14V5L6 13L3 16H-1z', '#f3f2f1', '#f3f2f1'), smallBolt],
  [frame(1, 26), svg`<rect x="8" y="2" width="19" height="4" fill=${LG}/>`, P('M8 6.500H27', G), R(6, 10, 4, 4, 'g'), R(6, 18, 4, 4, 'g'), P('M13 13H30V30H15z', '#f3f2f1', '#f3f2f1'), funnel, P('M-1 0H13V5L5 15H-1z', '#f3f2f1', '#f3f2f1'), smallBolt],
  [P('M3 1H27V20L12 26.500H2V14', B, '#fff', 2), P('M18 2V9L12 11V19L9 26H16L18 19L22 15L26 12V2z', B, LB, 1), P('M0 0H8V8L4 15L0 9z', '#dc6a10', '#dc6a10', 1), svg`<circle cx="4" cy="5" r="1.800" fill="#fff"/><circle cx="23.500" cy="23.500" r="5" fill="#f3f2f1"/><circle cx="24" cy="24" r="3.800" fill="#dc6a10"/><circle cx="26.500" cy="16" r="2.500" fill="#dc6a10"/>`],
  [P('M10 2L.8 14L10 26L19 14zM18 2L27 14L18 26M10 2H18M10 26H18M14.500 8L19 2M14.500 20L18 26M19 14L23 8.500M19 14L23 20', '#8f2d9c', '#fff', 1.500)],
  [P('M1 3H19L27 14L19 25H1L17 3M1 3L8.500 14M10.500 25L23 8.500', '#1b7fe0', '#fff', 1.500)],
];

const fields: [string, number, boolean][] = [['Discount', 69, true], ['Order Date', 88, true], ['Order ID', 68, false], ['Postal Code', 93.5, true], ['Product ID', 84, false], ['Product Name', 114, false], ['Profit', 44, true], ['Quantity', 69, true], ['Region', 55, false], ['Sales', 40, true], ['Segment', 71, false], ['Ship Date', 76.5, true], ['Ship Mode', 86, false], ['State', 39.5, false], ['Sub-Category', 109, false]];

@customElement('app-root')
export class AppRoot extends LitElement {
  static styles = css`
    :host { display: flex; flex-direction: column; width: 1919px; height: 957px; overflow: hidden; font-family: "Open Sans", "Noto Sans", sans-serif; color: #252423; background: #f3f2f1; }
    * { box-sizing: border-box; }
    svg { flex: none; display: block; overflow: visible; }
    svg text { font-family: "Open Sans", "Noto Sans", sans-serif; }
    .head { height: 190px; flex: none; background: #fafafa; border-top: 1px solid #3b3a39; box-shadow: 0 1px 7px rgba(0,0,0,.22); position: relative; z-index: 2; display: flex; flex-direction: column; }
    .tabs { height: 54px; display: flex; font-size: 20px; line-height: 50px; }
    .tab { height: 47px; flex: none; }
    .tab.on { font-weight: 600; border-bottom: 5px solid #117865; }
    .share { margin: 6px 8px 0 auto; width: 125px; height: 36px; border-radius: 5px; background: #117865; color: #fff; display: flex; align-items: center; font-size: 17px; line-height: 36px; padding-left: 10px; gap: 13px; }
    .share .chev { margin-left: -6px; }
    .ribbon { display: flex; height: 133px; align-items: flex-start; font-size: 17.200px; }
    .grp { height: 132px; border-right: 1px solid #d2d0ce; display: flex; flex-direction: column; justify-content: space-between; flex: none; }
    .btns { display: flex; }
    .btn { display: flex; flex-direction: column; align-items: center; padding-top: 5px; line-height: 23.500px; flex: none; }
    .btn .ri { margin-bottom: 2px; }
    .ln { display: flex; align-items: center; gap: 5px; height: 23.500px; }
    .off { color: #c8c6c4; }
    .gl { height: 14px; line-height: 14px; font-size: 14.400px; text-align: center; color: #3b3a39; padding-top: 1px; }
    .clip { width: 240px; }
    .clip .body { display: flex; }
    .paste { width: 42px; margin-left: 21px; }
    .paste .ri { margin-left: 2px; }
    .cmds { margin-left: 15px; padding-top: 0; }
    .cmd { display: flex; align-items: center; height: 36px; gap: 6px; }
    .fold { margin: 115px 6px 0 auto; color: #252423; }
    .fold svg { transform: rotate(180deg); }
    .main { flex: 1; display: flex; min-height: 0; }
    .rail { width: 61px; border-right: 1px solid #dddbd9; flex: none; }
    .rail div { height: 60px; display: grid; place-items: center; padding: 0 0 3px 0; }
    .rail div.on { border-left: 4px solid #117865; padding-right: 4px; padding-bottom: 1px; }
    .mid { width: 1317px; flex: none; display: flex; flex-direction: column; }
    .work { display: flex; height: 679px; background: #fff; }
    .canvas { width: 1016px; display: grid; grid-template: 316px 240px auto / auto; overflow: hidden; }
    .row { display: flex; }
    .dots { height: 3px; margin: 15px 0 0 2px; width: 1012px; background: repeating-linear-gradient(90deg, #605e5c 0 3px, transparent 3px 6px); }
    .ti { font-family: Roboto, sans-serif !important; fill: #252423; font-weight: 400; stroke: #252423; stroke-width: .2px; }
    .cx { fill: #605e5c; } .cb { fill: #484644; font-weight: 600; } .tm { fill: #fff; stroke: #fff; stroke-width: .5px; }
    .big { font-family: Roboto, sans-serif !important; font-weight: 300; fill: #605e5c; }
    .filters { width: 301px; border-left: 1px solid #a19f9d; font-size: 18.500px; }
    .fh { display: flex; height: 68px; align-items: center; padding: 0 14px 9px 17px; font-size: 22.500px; font-weight: 600; }
    .fh .eye { margin: 0 26px 4px auto; }
    .fs { margin-left: 12px; width: 270px; height: 46px; border: 1px solid #a19f9d; border-radius: 3px; display: flex; align-items: center; padding-left: 15px; gap: 21px; font-size: 19px; }
    .rule { border-top: 1px solid #a19f9d; margin-top: 6px; height: 26px; }
    .fl { display: flex; justify-content: space-between; align-items: center; height: 24px; margin: 0 18px 0 13px; }
    .fb { margin: 13px 12px 40px; width: 276px; height: 68px; border: 1px solid #c8c6c4; border-radius: 3px; display: grid; place-items: center; }
    .pages { height: 53px; display: flex; font-size: 18px; }
    .ptab { width: 114px; border-left: 1px solid #a19f9d; border-right: 1px solid #a19f9d; border-bottom: 5px solid #117865; background: #fff; text-align: center; line-height: 57px; font-weight: 600; }
    .plus { width: 59px; background: #117865; display: grid; place-items: center; }
    .viz { width: 271px; border-left: 1px solid #d9d7d5; flex: none; display: flex; flex-direction: column; }
    .vh { height: 58px; display: flex; align-items: center; justify-content: space-between; padding: 1px 12px 0 13px; font-size: 22.500px; font-weight: 600; }
    .bv { height: 28px; line-height: 23px; padding-left: 13px; font-size: 17.200px; font-weight: 600; }
    .modes { height: 55px; padding-left: 12px; display: flex; gap: 56px; }
    .mode { width: 48px; height: 48px; border-radius: 4px; background: #d2d0ce; display: grid; place-items: center; }
    .gal { display: grid; grid-template-columns: repeat(6, 28px); gap: 14px; padding: 16px 0 0 16px; }
    .more { height: 57px; padding: 23px 0 0 19px; border-bottom: 1px solid #d9d7d5; flex: none; }
    .wells { display: flex; flex: 1; font-size: 17.500px; color: #323130; }
    .wl { width: 261px; line-height: 24px; }
    .bar { width: 9px; height: 171px; margin-top: 3px; background: #d2d0ce; border-radius: 5px; }
    .wl .v { padding: 12px 0 0 18px; }
    .drop { margin: 8px 0 0 6px; width: 255px; height: 42px; background: #fff; border: 1px dashed #c8c6c4; border-radius: 3px; line-height: 39px; padding-left: 15px; }
    .drill { padding: 16px 0 0 18px; font-weight: 600; color: #484644; }
    .opt { display: flex; height: 40px; align-items: center; justify-content: space-between; padding: 0 24px 0 18px; }
    .opt.first { margin-top: 5px; }
    .tg { width: 48px; height: 24px; border-radius: 12px; border: 1px solid #797775; background: #fff; color: #605e5c; font-size: 14px; display: flex; align-items: center; padding: 0 6px; justify-content: space-between; line-height: 22px; }
    .tg i { width: 12px; height: 12px; border-radius: 6px; background: #605e5c; }
    .tg.on { background: #117865; border-color: #117865; color: #fff; } .tg.on i { background: #fff; }
    .data { flex: 1; border-left: 1px solid #d9d7d5; }
    .dh { height: 58px; display: flex; align-items: center; justify-content: space-between; padding: 1px 11px 0 13px; font-size: 22.500px; font-weight: 600; }
    .ds { margin: 10px 0 0 6px; width: 258px; height: 36px; background: #fff; border: 1px solid #d2d0ce; border-bottom: 1px solid #605e5c; border-radius: 5px; display: flex; align-items: center; padding: 2px 0 0 19px; gap: 10px; font-size: 19.500px; color: #797775; line-height: 34px; }
    .ds svg { margin-top: -3px; }
    .list { display: flex; height: 627px; margin-top: 3px; justify-content: space-between; font-size: 17.200px; color: #323130; }
    .f { height: 36px; display: flex; align-items: center; padding-left: 66px; }
    .cb2 { width: 18px; height: 18px; border: 1px solid #797775; border-radius: 3px; flex: none; }
    .sg { width: 39px; padding-left: 12px; flex: none; }
    .f fit-label { margin-top: 1px; }
    .tb { padding-left: 24px; gap: 9px; }
    .sb { width: 12px; height: 439px; background: #c8c8c8; margin: 174px 5px 0 0; }
    .status { height: 35px; flex: none; border-top: 1px solid #dddbd9; display: flex; align-items: center; color: #484644; font-size: 18px; padding: 3px 6px 0 6px; }
    .zoomer { margin: -3px 20px 0 auto; }
    .status .fitp { margin: -2px 21px 0 29px; }
    .pct { margin-top: -3px; }
  `;
  render() {
    let tx = 0;
    return html`
    <div class="head">
      <div class="tabs">
        ${tabs.map(([n, x, w]) => { const m = x - tx; tx = x + w; return html`<div class="tab ${n === 'Home' ? 'on' : ''}" style="margin-left:${m}px;width:${w}px">${t(n, w)}</div>`; })}
        <div class="share"><svg width="23" height="21" viewBox="0 0 23 21"><path d="M1 6V20H17V17M5 15C6 9 9 6.500 14 6.500V2L22 9L14 15.500V11C10 11 7 12 5 15z" fill="none" stroke="#fff" stroke-width="1.600"/></svg>${t('Share', 45)}${chev(16, 1)}</div>
      </div>
      <div class="ribbon">
        <div class="grp clip">
          <div class="body off">
            <div class="btn paste"><svg class="ri" width="48" height="52" viewBox="0 0 48 52">
              <path d="M12 9.500H4V45H23" fill="none" stroke="#f2cda4" stroke-width="2.500"/><path d="M11 12H7V42.500H23V22H32V12z" fill="#fdf3dd"/><path d="M30 9.500H35V20" fill="none" stroke="#f2cda4" stroke-width="2.500"/>
              <path d="M10 15V8.500H14C15 3 24 3 25 8.500H29V15z" fill="#fafafa" stroke="#bdbbb9" stroke-width="1.600"/><rect x="24" y="23" width="20" height="26" fill="#fafafa" stroke="#a9a7a5" stroke-width="1.800"/></svg>${t('Paste', 42)}</div>
            <div class="cmds">
              <div class="cmd"><svg width="24" height="25" viewBox="0 0 24 25"><path d="M7 0L16 18M17 0L8 18" stroke="#a9a7a5" stroke-width="1.500"/><circle cx="7" cy="21" r="2.800" fill="none" stroke="#9bcbe8" stroke-width="1.600"/><circle cx="17" cy="21" r="2.800" fill="none" stroke="#9bcbe8" stroke-width="1.600"/></svg>${t('Cut', 27)}</div>
              <div class="cmd"><svg width="24" height="25" viewBox="0 0 24 25"><path d="M9 21H1V1H8L12 5M9 24V6H17L23 12V24zM16 6V12H23M13 15H19M13 19H19" fill="none" stroke="#b5b3b1" stroke-width="1.500"/></svg>${t('Copy', 41)}</div>
              <div class="cmd"><svg width="24" height="25" viewBox="0 0 24 25"><path d="M1 11L10 6L18 15L10 24z" fill="#fdf0da" stroke="#f2c498" stroke-width="1.500"/><path d="M1 11L14 19" stroke="#f2c498"/><path d="M10 6L13 3.500L16 6L21 1L23.500 3.500L18 9L21 12L18 15z" fill="#fafafa" stroke="#b5b3b1" stroke-width="1.500"/></svg>${t('Format painter', 117)}</div>
            </div>
          </div>
          <div class="gl">${t('Clipboard', 64)}</div>
        </div>
        ${groups.map(g => { let px = g.x; return html`<div class="grp" style="width:${g.end - g.x}px">
          <div class="btns">${g.btns.map(b => { const m = b.x - px; px = b.x + b.w; return html`<div class="btn ${b.off ? 'off' : ''}" style="margin-left:${m}px;width:${b.w}px">${ico(b.icon)}
            ${b.lines.map(([s, w, c]) => html`<div class="ln">${s ? t(s, w) : ''}${c ? chev() : ''}</div>`)}</div>`; })}</div>
          <div class="gl">${t(g.label, g.lw)}</div></div>`; })}
        <div class="fold">${chev(14, 1.6)}</div>
      </div>
    </div>
    <div class="main">
      <div class="rail">
        <div class="on"><svg width="22" height="21" viewBox="0 0 22 21"><path d="M1 0V20H22M4.500 4.500H8V17H4.500zM10.500 7.500H14V17H10.500zM16.500 1.500H20V17H16.500z" fill="none" stroke="#111" stroke-width="1.700"/></svg></div>
        <div><svg width="25" height="23" viewBox="0 0 25 23"><path d="M1 1H24V22H1zM1 4H24M1 10H24M1 16H24M8.500 4V22M16.500 4V22" fill="none" stroke="#797775" stroke-width="1.500"/></svg></div>
        <div><svg width="28" height="28" viewBox="0 0 28 28"><path d="M1 9H12V19H1zM1 13H12M17 1H27V12H17zM17 5H27M17 16H27V27H17zM17 20H27M7 9V4H17M7 19V24H17" fill="none" stroke="#797775" stroke-width="1.500"/></svg></div>
        <div><svg width="28" height="25" viewBox="0 0 28 25"><path d="M7 16V3C7 1.500 8 1 9 1H15L22 8V17C22 21 21 22 19 23M15 1V8H22M25 9V18C25 22 23 24 20 24" fill="none" stroke="#797775" stroke-width="1.500"/><text x="0" y="24" font-size="10" font-weight="600" fill="#797775" textLength="20" lengthAdjust="spacingAndGlyphs">DAX</text></svg></div>
      </div>
      <div class="mid">
        <div class="work">
          <div class="canvas">
            <div class="row"><svg width="399" height="316" viewBox="61 190 399 316">${barChart()}</svg><svg width="617" height="316" viewBox="0 15 1851 948">${treemap()}</svg></div>
            <div class="row"><svg width="379" height="240" viewBox="61 506 379 240">${pie()}</svg><svg width="637" height="240" viewBox="440 506 637 240">${gauge()}</svg></div>
            <div class="dots"></div>
          </div>
          <div class="filters">
            <div class="fh"><svg width="26" height="23" viewBox="0 0 26 23"><path d="M1.500 1.500H24.500L16 11.500V21.500H10V11.500z" fill="none" stroke="#252423" stroke-width="2.200"/></svg><span style="width:12px"></span>${t('Filters', 64)}
              <svg class="eye" width="20" height="14" viewBox="0 0 20 14"><path d="M1 9C4 -1.500 16 -1.500 19 9" fill="none" stroke="#252423" stroke-width="1.600"/><circle cx="10" cy="9" r="3" fill="none" stroke="#252423" stroke-width="1.800"/></svg>${dbl}</div>
            <div class="fs"><svg width="24" height="24" viewBox="0 0 24 24"><circle cx="15.500" cy="8.500" r="7.600" fill="none" stroke="#252423" stroke-width="1.400"/><path d="M10 14L.8 23.200" stroke="#252423" stroke-width="1.400"/></svg>${t('Search', 58)}</div>
            <div class="rule"></div>
            ${([['Filters on this page', 149.5], ['Filters on all pages', 147]] as [string, number][]).map(([s, w]) => html`
              <div class="fl">${t(s, w)}<svg width="17" height="3" viewBox="0 -4 17 3"><path d="M0 0h2M7.500 0h2M15 0h2" stroke="#323130" stroke-width="2"/></svg></div><div class="fb">${t('Add data fields here', 160)}</div>`)}
          </div>
        </div>
        <div class="pages">
          <svg width="191" height="52" viewBox="61 869 191 52"><g fill="none" stroke="#484644" stroke-width="1.700"><rect x="80" y="880.500" width="27.500" height="14.500"/><path d="M94 895v5M89 900.500h10"/><rect x="151" y="877" width="18" height="28.500" rx="1.500"/><path d="M158 901.500h4"/></g><rect x="76" y="911" width="36" height="4" rx="2" fill="#117865"/><path d="M208.500 889v12.500l-7-6.200zM235 889v12.500l7-6.200z" fill="#c8c6c4"/></svg>
          <div class="ptab">${t('Page 1', 51.5)}</div>
          <div class="plus"><svg width="17" height="17" viewBox="0 0 17 17"><path d="M8.500 0V17M0 8.500H17" stroke="#fff" stroke-width="4.500"/></svg></div>
        </div>
      </div>
      <div class="viz">
        <div class="vh">${t('Visualizations', 147.5)}${dbl}</div>
        <div class="bv">${t('Build visual', 91.5)}</div>
        <div class="modes"><div class="mode"><svg width="36" height="36" viewBox="0 0 36 36"><path d="M0 1H29" stroke="#252423" stroke-width="1.600"/><g fill="#117865" stroke="#111" stroke-width="1.500" stroke-dasharray="3 2"><rect x=".8" y="8" width="34.400" height="10.500"/><rect x=".8" y="24.500" width="34.400" height="10.500"/></g></svg></div>
          <svg width="38" height="48" viewBox="0 0 38 48"><path d="M7 41.500H1.500V6.500H17L26 15V20M17 6.500V17H26" fill="none" stroke="#252423" stroke-width="1.700"/><path d="M36 20C32 20 25 27 21.500 32L24 35C28 31 35 24 36 20zM21.500 32C16 32 17 39 9 40C14 43 25 42 24 35" fill="none" stroke="#252423" stroke-width="1.700"/></svg></div>
        <svg width="270" height="13" viewBox="0 0 270 13"><path d="M0 12H24.500L36 .8L47.500 12H270" fill="none" stroke="#8a8886" stroke-width="1.400"/></svg>
        <div class="gal">${viz.map(v => html`<svg width="28" height="28" viewBox="0 0 28 28">${v}</svg>`)}</div>
        <div class="more"><svg width="22" height="4" viewBox="0 0 22 4"><path d="M0 2h3M9 2h3M18 2h3" stroke="#252423" stroke-width="3"/></svg></div>
        <div class="wells"><div class="wl">
          <div class="v">${t('Values', 50)}</div>
          <div class="drop">${t('Add data fields here', 160)}</div>
          <div class="drill">${t('Drill through', 104)}</div>
          <div class="opt first">${t('Cross-report', 99)}<div class="tg"><i></i>${t('Off', 19)}</div></div>
          <div class="opt">${t('Keep all filters', 110)}<div class="tg on">${t('On', 18)}<i></i></div></div>
        </div><div class="bar"></div></div>
      </div>
      <div class="data">
        <div class="dh">${t('Data', 49)}${dbl}</div>
        <div class="ds"><svg width="22" height="22" viewBox="0 0 22 22"><circle cx="9" cy="9" r="8" fill="none" stroke="#605e5c" stroke-width="1.500"/><path d="M15 15L21 21" stroke="#605e5c" stroke-width="1.500"/></svg>${t('Search', 61)}</div>
        <div class="list"><div>
          ${fields.map(([n, w, s]) => html`<div class="f"><div class="cb2"></div><div class="sg">${s ? html`<svg width="18" height="19" viewBox="0 0 18 19"><path d="M16.500 1.200H1.500L9 9.500L1.500 17.700H16.500" fill="none" stroke="#252423" stroke-width="1.700"/></svg>` : ''}</div>${t(n, w)}</div>`)}
          ${([['People', 53.5], ['Returns', 59]] as [string, number][]).map(([n, w]) => html`<div class="f tb"><svg width="10" height="18" viewBox="0 0 10 18"><path d="M1 .8L9 9L1 17.200" fill="none" stroke="#323130" stroke-width="1.300"/></svg><svg width="19" height="18" viewBox="0 0 19 18"><path d="M1 5H18M1 12.500H18M6.500 1V17M12.500 1V17" stroke="#252423" stroke-width="1.500"/><rect x="1" y="1" width="17" height="16" rx="3" fill="none" stroke="#252423" stroke-width="1.600"/></svg>${t(n, w)}</div>`)}
        </div><div class="sb"></div></div>
      </div>
    </div>
    <div class="status">${t('Page 1 of 1', 87)}
      <svg class="zoomer" width="184" height="20" viewBox="0 0 184 20"><path d="M0 10H7M173 10H185M179 4.500V16" stroke="#484644" stroke-width="2"/><path d="M14 10H164M89 6V14" stroke="#605e5c" stroke-width="1.500"/><rect x="48" y="1.500" width="5" height="17" fill="#484644"/></svg>
      <div class="pct">${t('53%', 34)}</div>
      <svg class="fitp" width="24" height="18" viewBox="0 0 24 18"><rect x=".8" y=".8" width="22.400" height="16.400" fill="none" stroke="#605e5c" stroke-width="1.500"/><path d="M4 7V4H8M16 4H20V7M20 11V14H16M8 14H4V11" fill="none" stroke="#605e5c" stroke-width="1.500"/></svg>
      ${t('Update available (click to download)', 287)}</div>`;
  }
}
